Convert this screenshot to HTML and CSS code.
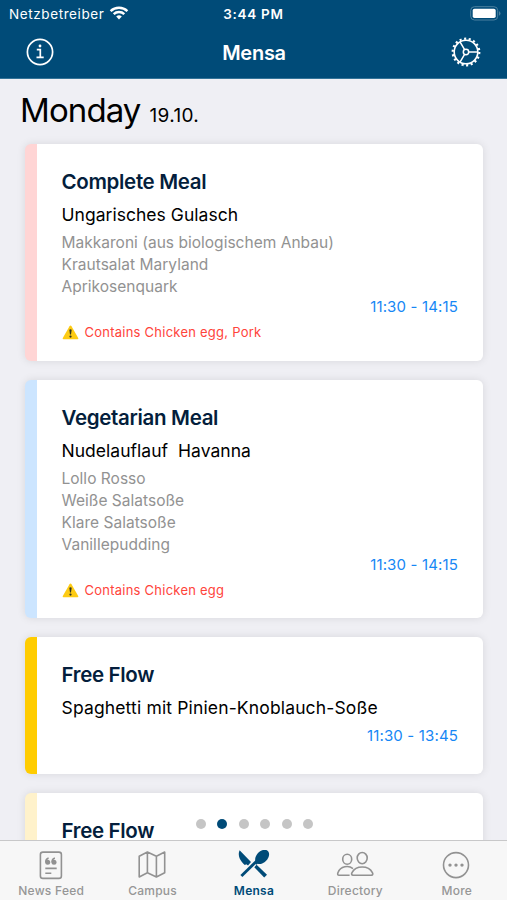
FILE: index.html
```html
<!DOCTYPE html>
<html lang="en">
<head>
<meta charset="utf-8">
<title>Mensa</title>
<link rel="stylesheet" href="styles.css">
</head>
<body>
<div class="app">
  <header class="header">
    <div class="status">
      <div class="carrier"><span>Netzbetreiber</span>
        <svg width="20" height="14" viewBox="0 0 20 14" fill="none" stroke="#fff" stroke-width="2.4"><path d="M1.6 5.2a12 12 0 0 1 16.8 0M4.7 8.2a7.6 7.6 0 0 1 10.6 0"/><path d="M10 13.4 7.2 10.6a4 4 0 0 1 5.6 0z" fill="#fff" stroke="none"/></svg>
      </div>
      <div class="clock">3:44 PM</div>
      <svg class="battery" width="31" height="15" viewBox="0 0 31 15"><rect x=".7" y=".7" width="27" height="13.3" rx="3.8" fill="none" stroke="#4b809f"/><rect x="2.7" y="2.7" width="23" height="9.3" rx="1.8" fill="#fff"/><path d="M29 5q3 2.4 0 4.8z" fill="#4b809f"/></svg>
    </div>
    <div class="nav">
      <svg width="28" height="28" viewBox="0 0 28 28" fill="none" stroke="#fff" stroke-width="1.7"><circle cx="14" cy="14" r="12.6"/><path d="M10.8 11.6h3.5v7.6M10.5 19.3h7.2"/><circle cx="14" cy="8" r="1.4" fill="#fff" stroke="none"/></svg>
      <h1 class="title">Mensa</h1>
      <svg width="30" height="30" viewBox="0 0 30 30" fill="none" stroke="#fff"><circle cx="15" cy="15" r="13.3" stroke-width="2.2" stroke-dasharray="2.1 2.543"/><circle cx="15" cy="15" r="11.8" stroke-width="1.6"/><circle cx="15" cy="15" r="2.7" stroke-width="1.5"/><path d="M17.8 15h9M13.6 12.6 9 4.8M13.6 17.4 9 25.2" stroke-width="1.5"/></svg>
    </div>
  </header>
  <main class="content">
    <div class="day"><span class="weekday">Monday</span><span class="date">19.10.</span></div>
    <article class="card pink">
      <h2 class="category">Complete Meal</h2>
      <div class="dish">Ungarisches Gulasch</div>
      <ul class="sides"><li>Makkaroni (aus biologischem Anbau)</li><li>Krautsalat Maryland</li><li>Aprikosenquark</li></ul>
      <div class="time">11:30 - 14:15</div>
      <div class="warning"><svg width="17" height="15" viewBox="0 0 17 15"><path d="M8.5.5Q9.1.5 9.5 1.2L16.2 13Q16.8 14.3 15.4 14.3H1.6Q.2 14.3.8 13L7.5 1.2Q7.9.5 8.5.5Z" fill="#fdcb14"/><path d="M7.3 4.8q1.2-1 2.4 0L9 9.6H8z" fill="#333522"/><circle cx="8.5" cy="11.6" r="1.15" fill="#333522"/></svg><span>Contains Chicken egg, Pork</span></div>
    </article>
    <article class="card blue">
      <h2 class="category">Vegetarian Meal</h2>
      <div class="dish">Nudelauflauf&nbsp; Havanna</div>
      <ul class="sides"><li>Lollo Rosso</li><li>Weiße Salatsoße</li><li>Klare Salatsoße</li><li>Vanillepudding</li></ul>
      <div class="time">11:30 - 14:15</div>
      <div class="warning"><svg width="17" height="15" viewBox="0 0 17 15"><path d="M8.5.5Q9.1.5 9.5 1.2L16.2 13Q16.8 14.3 15.4 14.3H1.6Q.2 14.3.8 13L7.5 1.2Q7.9.5 8.5.5Z" fill="#fdcb14"/><path d="M7.3 4.8q1.2-1 2.4 0L9 9.6H8z" fill="#333522"/><circle cx="8.5" cy="11.6" r="1.15" fill="#333522"/></svg><span>Contains Chicken egg</span></div>
    </article>
    <article class="card yellow">
      <h2 class="category">Free Flow</h2>
      <div class="dish wide">Spaghetti mit Pinien-Knoblauch-Soße</div>
      <div class="time">11:30 - 13:45</div>
    </article>
    <article class="card cream">
      <h2 class="category">Free Flow</h2>
    </article>
    <div class="dots"><i></i><i class="active"></i><i></i><i></i><i></i><i></i></div>
  </main>
  <nav class="tabs">
    <div class="tab"><svg width="36" height="30" viewBox="0 0 36 30" fill="none" stroke="#929292" stroke-width="1.6"><rect x="7.4" y="2.1" width="21" height="26.3" rx="2.5"/><path d="M12.3 18.4h11.4M12.3 23.2h6"/><g fill="#929292" stroke="none"><circle cx="14.7" cy="12.3" r="2.5"/><circle cx="21" cy="12.3" r="2.5"/></g><path d="M12.8 12.3q-.2-3.6 2.8-4.3M19.1 12.3q-.2-3.6 2.8-4.3"/></svg><span>News Feed</span></div>
    <div class="tab"><svg width="36" height="30" viewBox="0 0 36 30" fill="none" stroke="#929292" stroke-width="1.6" stroke-linejoin="round"><path d="M5.2 6.3 13.4 2l9 4.3L30.7 2v20.7l-8.3 4.3-9-4.3-8.2 4.3zM13.4 2v20.7M22.4 6.3V27"/></svg><span>Campus</span></div>
    <div class="tab active"><svg width="36" height="30" viewBox="0 0 36 30" fill="#004b78"><path d="M4.6.3 16 12l-3 3.4-1.7-1.2-1.5.8C5.3 11.5 2.2 5.2 4.6.3Z"/><path d="m5.4 25 17.2-16.8 2 2L7.4 27z"/><path d="m19.3 17.2 2.3-2.4L32 24.8 29.2 27.5z"/><path d="M20.6 12.2C18.4 6.2 24.8-.4 29.8-.2c4.3 0 5 4.2 3.8 7.2-1.5 4.4-7.2 8.2-10.9 6.7l-1.2 1.1-1.8-1.6z"/></svg><span>Mensa</span></div>
    <div class="tab"><svg width="38" height="30" viewBox="0 0 38 30" fill="none" stroke="#929292" stroke-width="1.6" stroke-linejoin="round"><ellipse cx="11.2" cy="9.2" rx="4.5" ry="5"/><ellipse cx="26.2" cy="8.1" rx="5" ry="5.6"/><path d="M13.6 25.3H3.1q-2-.1-1.2-2.5C4.5 16 12.6 15.1 17 18.6"/><path d="M17.1 25.3h18.2q2.3-.4 1.1-2.7c-3.9-7.4-16.5-7.4-20.4 0q-1.2 2.3 1.1 2.7z"/></svg><span>Directory</span></div>
    <div class="tab"><svg width="36" height="30" viewBox="0 0 36 30" fill="none" stroke="#929292" stroke-width="1.6"><circle cx="18" cy="15.1" r="12.5"/><g fill="#929292" stroke="none"><circle cx="12" cy="15.1" r="1.7"/><circle cx="18" cy="15.1" r="1.7"/><circle cx="24" cy="15.1" r="1.7"/></g></svg><span>More</span></div>
  </nav>
</div>
</body>
</html>
```
FILE: styles.css
```css
* { box-sizing: border-box; }
body { margin: 0; font-family: Inter, "Liberation Sans", sans-serif; }
svg { display: block; flex: none; }
h1, h2, ul { margin: 0; padding: 0; }
ul { list-style: none; }
.app { height: 900px; display: flex; flex-direction: column; background: #efeff4; overflow: hidden; }
.header { height: 79px; flex: none; background: #004b78; color: #fff; border-bottom: 1px solid #337398; }
.status { height: 27px; display: grid; grid-template-columns: 1fr auto 1fr; align-items: center; padding: 0 6px 0 9px; font-size: 13.5px; }
.carrier { display: flex; align-items: center; gap: 5px; letter-spacing: .6px; }
.carrier svg { margin-top: -1px; }
.clock { font-weight: 600; letter-spacing: .7px; margin-left: -3px; }
.battery { justify-self: end; }
.nav { height: 50px; display: flex; align-items: center; justify-content: space-between; padding: 0 26px; }
.title { font-size: 20px; line-height: 24px; font-weight: 600; letter-spacing: -.25px; padding: 1px 0 0 3px; }
.content { flex: 1; min-height: 0; overflow: hidden; position: relative; padding: 0 24px; }
.day { height: 65px; margin-left: -4px; padding-top: 10px; line-height: 42px; white-space: nowrap; }
.weekday { font-size: 33px; letter-spacing: -.9px; }
.date { font-size: 19px; letter-spacing: .35px; margin-left: 9px; }
.card { display: flow-root; background: #fff; border-left: 12px solid; border-radius: 6px; margin-left: 1px; padding: 25px 25px 0 24.5px; box-shadow: 0 0 8px rgba(0, 0, 0, .10); margin-bottom: 19.5px; }
.pink { height: 216.5px; border-color: #ffd5d5; }
.blue { height: 237.5px; border-color: #cce5ff; }
.yellow { height: 136.5px; border-color: #fc0; }
.cream { height: 136px; border-color: #fff2cb; }
.category { font-size: 20.5px; line-height: 25px; font-weight: 600; letter-spacing: -.32px; color: #041e3c; }
.dish { font-size: 17.5px; line-height: 24px; letter-spacing: .03px; margin-top: 9px; white-space: nowrap; }
.dish.wide { letter-spacing: .15px; }
.sides { font-size: 15.5px; line-height: 22px; letter-spacing: .02px; color: #929292; margin-top: 5px; }
.time { text-align: right; font-size: 15px; line-height: 18px; letter-spacing: .15px; color: #1687f5; }
.yellow .time { margin-top: 7px; }
.warning { display: flex; align-items: center; gap: 6px; color: #ff443b; font-size: 13px; line-height: 18px; letter-spacing: .24px; margin-top: 7px; }
.dots { position: absolute; bottom: 11px; left: 2px; right: 0; display: flex; justify-content: center; gap: 11.6px; }
.dots i { width: 10px; height: 10px; border-radius: 50%; background: #c5c5c5; }
.dots .active { background: #004b78; }
.tabs { height: 60px; flex: none; display: grid; grid-template-columns: repeat(5, 1fr); background: #f7f7f7; border-top: 1px solid #c8c8c9; padding-top: 9px; }
.tab { display: flex; flex-direction: column; align-items: center; font-size: 12px; line-height: 15px; font-weight: 500; letter-spacing: .25px; color: #969696; }
.tab span { margin-top: 3px; padding-left: 1px; }
.tab.active { color: #004b78; font-weight: 600; }
```
